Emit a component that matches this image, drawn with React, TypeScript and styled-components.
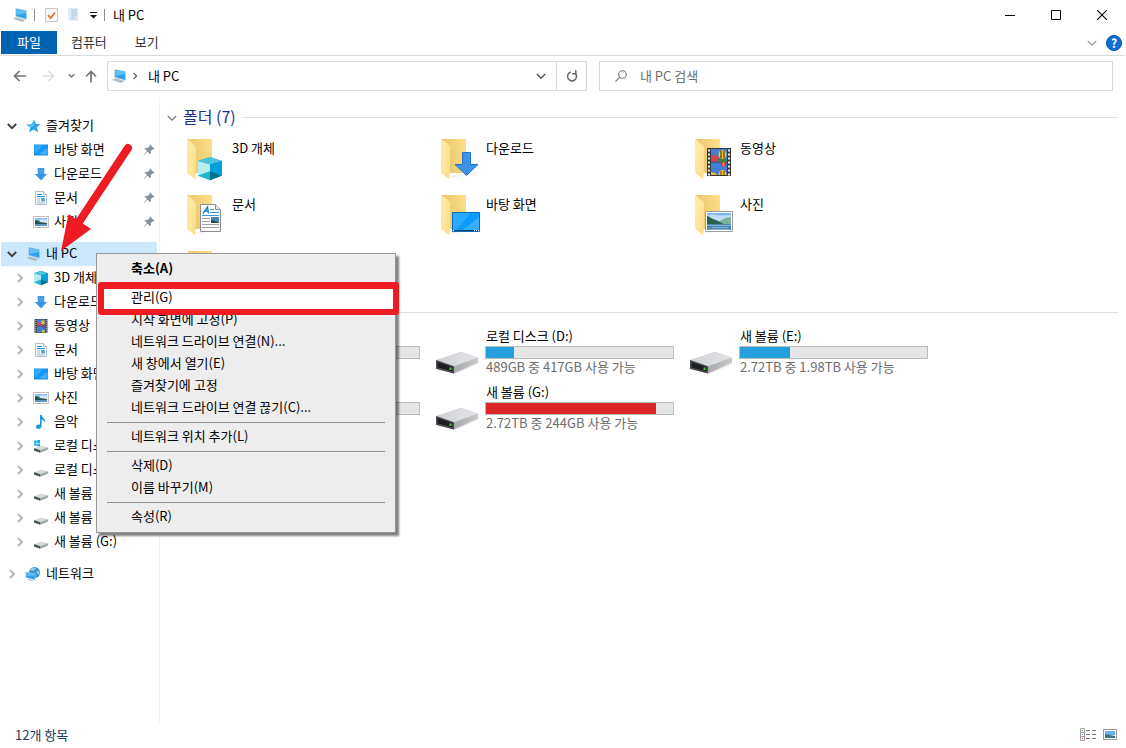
import React from "react";
import styled, { createGlobalStyle, css } from "styled-components";

const GlobalStyle = createGlobalStyle`
  *, *::before, *::after { box-sizing: border-box; }
  body {
    margin: 0;
    background: #fff;
    color: #000;
    font-family: "Noto Sans CJK KR", "Malgun Gothic", sans-serif;
    font-size: 13px;
    line-height: 18px;
  }
  button, input { font: inherit; color: inherit; }
  button { border: 0; padding: 0; background: none; }
  ul { list-style: none; margin: 0; padding: 0; }
  svg { display: block; flex: none; }
`;

/* ---------- icons ---------- */

const PcIcon = () => (
  <svg width="16" height="16" viewBox="0 0 16 16">
    <path d="M.500 11.700 4.500 9.400l9.500 3-3.600 2.600z" fill="#a9bdc9" />
    <path d="M.500 11.700 4.500 9.400l9.500 3-.8.500L4.600 10.600l-3 1.600z" fill="#dfe9ef" />
    <path d="M3.600 1.200 14.600 3.400v8.800L3.600 9.200z" fill="#7fb4d8" />
    <path d="M4.300 2 14 4v7.400L4.300 8.700z" fill="#2f9ff0" />
    <path d="M4.300 2 14 4v2L4.300 8z" fill="#63bffa" />
  </svg>
);

const StarIcon = () => (
  <svg width="16" height="16" viewBox="0 0 16 16">
    <path d="M9.200 1.400 10.800 6l4.700.2-3.700 3 1.400 5.200-4.500-2.800L4 14.600l1.400-5L1.300 6.800l5.200-.5z" fill="#2fa2ee" />
    <path d="M9.200 1.400 8.600 8 5.400 9.600 1.300 6.800l5.200-.5z" fill="#5fbdf6" />
  </svg>
);

const DesktopIcon = () => (
  <svg width="16" height="16" viewBox="0 0 16 16">
    <path d="M1 2.500h14v11H1z" fill="#0a84d8" />
    <path d="M1.500 3h13v9.500h-13z" fill="#1499f6" />
    <path d="M1.500 12.500 10 3H1.500z" fill="#2cacff" />
    <path d="M6 12.500l8.500-7v7z" fill="#3db0fc" />
  </svg>
);

const DownIcon = () => (
  <svg width="16" height="16" viewBox="0 0 16 16">
    <path d="M4.700 2h6.600v6H14l-6 6.500L2 8h2.700z" fill="#3892e6" />
    <path d="M5.500 2.500h5v6h-5z" fill="#4a9feb" />
  </svg>
);

const DocIcon = () => (
  <svg width="16" height="16" viewBox="0 0 16 16">
    <path d="M2.500 1.500h8l3 3v10h-11z" fill="#f8fbfd" stroke="#b4bfc6" />
    <path d="M10.500 1.500v3h3" fill="#e6edf2" stroke="#b4bfc6" />
    <path d="M4 4.500h5M4 6.500h8" stroke="#2c95d6" strokeWidth="1.200" />
    <path d="M4 9h3M4 11h3M4 13h8" stroke="#a9b6c0" />
    <path d="M8 8h4v3.500H8z" fill="#5ea8d2" />
  </svg>
);

const PhotoIcon = () => (
  <svg width="16" height="16" viewBox="0 0 16 16">
    <path d="M.500 2.500h15v11H.500z" fill="#fff" stroke="#bdbfc1" />
    <path d="M2 4h12v4H2z" fill="#8cc5f2" />
    <path d="M7 6c2-1 4-.500 7 .500V9H7z" fill="#d6e9f7" />
    <path d="M2 6.500c2-.600 3 0 5 1.500L14 9v1.500H2z" fill="#27545c" />
    <path d="M2 10h12v2H2z" fill="#5f96bd" />
  </svg>
);

const CubeShape = () => (
  <>
    <path d="M8 .800 15 3.200v9L8 15.200 1 12.200v-9z" fill="#0fa5ce" />
    <path d="M1 3.200 8 5.200v10l-7-3z" fill="#b8ecf1" />
    <path d="M8 .800l7 2.400-7 2.200-7-2.200z" fill="#49c5dc" />
    <path d="M8 5.400l7-2.200v9l-7-2z" fill="#03a0d6" />
    <path d="M1 12.200l7-2.600 7 2.600-7 3z" fill="#1db6cf" />
    <path d="M8 9.600l7 2.600-7 3z" fill="#04708f" />
  </>
);

const CubeIcon = () => (
  <svg width="16" height="16" viewBox="0 0 16 16"><CubeShape /></svg>
);

const FilmShape = () => (
  <>
    <path d="M0 0h24v28H0z" fill="#3a3a3e" />
    <path d="M4 1h16v12.500H4zM4 14.500h16V27H4z" fill="#3f7fd6" />
    <path d="M4 9l3-3 4 3 4 2h5v2.500H4z" fill="#d8434f" />
    <path d="M10 11h10v2.500H10z" fill="#2e8b45" />
    <ellipse cx="15.500" cy="6.500" rx="4" ry="4.500" fill="#f0c62c" />
    <path d="M13.500 2.500h1v8h-1zM16.500 2.500h1v8h-1z" fill="#222" />
    <path d="M13 14.500h7l-2.500 4.500h-2z" fill="#d6303f" />
    <path d="M15.500 14.500h2l-.5 4h-1z" fill="#f0c62c" />
    <path d="M4 24l4 1 2 2H4z" fill="#eebc2a" />
    <path d="M11.500 27a4 5 0 0 1 8 0z" fill="#f0c62c" />
    <path d="M13.500 23h1v4h-1zM16.500 23h1v4h-1z" fill="#a22" />
    <path d="M2 1.500v26M22 1.500v26" stroke="#eee" strokeWidth="2" strokeDasharray="2 2" />
  </>
);

const FilmIcon = () => (
  <svg width="16" height="16" viewBox="0 0 16 16">
    <path d="M1.500 1h13v14h-13z" fill="#4a4a4e" />
    <path d="M4 1.500h8v6H4zM4 8.500h8v6H4z" fill="#3f7fd6" />
    <path d="M4 5l2-1.500L9 6l3 .5v1H4z" fill="#c8505a" />
    <path d="M8.500 2.500h3v3.500h-3zM9 12h2.500v2.500H9z" fill="#e8c040" />
    <path d="M9.500 8.500H12L11 10.500z" fill="#b03040" />
    <path d="M2.700 2v13M13.300 2v13" stroke="#b9b9b9" strokeDasharray="1 1" />
  </svg>
);

const MusicIcon = () => (
  <svg width="16" height="16" viewBox="0 0 16 16">
    <path d="M7 1h1.600c.300 2.600 4.400 3.400 3.400 7.600-.600-2-1.800-2.800-3.400-3.200v6.800c0 3-5.600 3.600-5.600.800 0-2 2.400-2.800 4-2.200z" fill="#1b93e0" />
  </svg>
);

const DriveSmall = ({ system }: { system?: boolean }) => (
  <svg width="16" height="16" viewBox="0 0 16 16">
    <path d="M1 10.200 8.500 7.600l6.500 1.600-7.500 3z" fill="#d6d8da" />
    <path d="M1 10.200l6.500 2v2.600L1 12.400z" fill="#3d4144" />
    <path d="M7.500 12.200l7.500-3v2.400l-7.500 3.200z" fill="#a1a4a7" />
    <path d="M5 12.200h1v1H5z" fill="#3ecb3e" />
    {system && (
      <path d="M1 2.800l2.700-.5v2.600H1zM4.200 2.200 7 1.700v3.200H4.200zM1 5.400h2.700V8L1 7.600zM4.200 5.400H7v3.200l-2.800-.5z" fill="#14b1e8" />
    )}
  </svg>
);

const NetworkIcon = () => (
  <svg width="16" height="16" viewBox="0 0 16 16">
    <circle cx="9.500" cy="6.500" r="5.500" fill="#3a8fc6" />
    <path d="M6 2.500c2-1.500 4-1.500 5 0L8.500 5 5 4.500zM12 4l2.500 2-1 3-2-2z" fill="#8fcbe9" />
    <path d="M.500 5.500l10 2.300v6.600L.500 11.600z" fill="#a8d4f0" />
    <path d="M1.200 6.400l8.600 2v5.200l-8.600-2.400z" fill="#2f9ef0" />
    <path d="M1.200 6.400l8.600 2v1.200L1.200 10z" fill="#5bb8f8" />
    <path d="M3 13.400l5 1.400" stroke="#9fb2bf" />
  </svg>
);

const PinIcon = () => (
  <svg width="12" height="12" viewBox="0 0 12 12">
    <path d="M7.200.600l4.200 4.200-1 .6-.6-.2-2 2 .2 2.200-.9.900-2.600-2.600L.800 11.300l-.2-.2L3.900 7 1.600 4.700l.9-.9 2.200.2 2-2-.2-.6z" fill="#8595a0" />
  </svg>
);

const Chevron = ({ dir, color = "#a6a6a6", width = 1.7 }: { dir: "right" | "down"; color?: string; width?: number }) => (
  <svg width="12" height="12" viewBox="0 0 12 12" fill="none" stroke={color} strokeWidth={width}>
    <path d={dir === "right" ? "M4 2 8 6l-4 4" : "M1.800 4 6 8.200 10.200 4"} />
  </svg>
);

const FolderIcon = ({ children }: { children?: React.ReactNode }) => (
  <svg width="48" height="48" viewBox="0 0 48 48">
    <defs>
      <linearGradient id="folderBack" x1="0" x2="1" y1=".3" y2="0">
        <stop offset="0" stopColor="#e9c46a" />
        <stop offset="1" stopColor="#fde08a" />
      </linearGradient>
      <linearGradient id="folderFront" x1="0" x2="1" y1="0" y2="1">
        <stop offset="0" stopColor="#ffeeb0" />
        <stop offset="1" stopColor="#fbdc85" />
      </linearGradient>
    </defs>
    <path d="M12 42l28-5 2 1-28 5z" fill="#f0f0f0" />
    <path d="M5 4h25v34H12z" fill="url(#folderBack)" />
    <path d="M5 4l9 7v23l-1 10-8-6z" fill="url(#folderFront)" />
    {children}
  </svg>
);

const folderBadges: Record<string, React.ReactNode> = {
  cube: <g transform="translate(14.300 20.700) scale(1.710 1.620)"><CubeShape /></g>,
  download: <path d="M26.500 17.500h8v12h7.500L30.500 40.500 19 29.500h7.500z" fill="#3b94e8" stroke="#2373c4" />,
  film: <g transform="translate(17 13)"><FilmShape /></g>,
  doc: (
    <>
      <path d="M18.500 13.500h15l5 5v22h-20z" fill="#fbfbfb" stroke="#8b8f92" />
      <path d="M33.500 13.500v5h5" fill="#e4e6e8" stroke="#8b8f92" />
      <path d="M21 22.500 25.500 16l1 6.500M23 20h3" stroke="#1a84d0" strokeWidth="1.400" fill="none" />
      <path d="M28 18.500h4M28 21.500h9M20 24.500h17" stroke="#3a97da" />
      <path d="M20 27.500h8M20 30.500h8M20 33.500h17M20 36.500h17" stroke="#a0a3a6" />
      <path d="M29 26h8v6h-8z" fill="#4c83b5" />
      <path d="M29 29l4 1 4 2h-8z" fill="#244b4b" />
    </>
  ),
  desktop: (
    <>
      <path d="M16.500 21.500h27v19h-27z" fill="#0a9bff" stroke="#0a6db8" />
      <path d="M17 22h18L20 39h-3z" fill="#2aaaff" />
      <path d="M43 26v13H27z" fill="#37b0ff" />
      <path d="M17 39.500h26" stroke="#063f70" />
      <path d="M17 39.500h1M38 39.500h1M40 39.500h1M42 39.500h1" stroke="#fff" />
    </>
  ),
  photo: (
    <>
      <path d="M15.500 20.500h27v20h-27z" fill="#fff" stroke="#9a9da0" />
      <path d="M17 22h24v9H17z" fill="#7db4f5" />
      <path d="M17 24c4 0 6-1 10 0s9 0 14 0v8H17z" fill="#c3def8" />
      <path d="M28 31c3-2 5-2 7-4l6-1v7H26z" fill="#78b39a" />
      <path d="M17 25c2 0 3 2 6 3s5 2 7 3l4 2H17z" fill="#2c6150" />
      <path d="M17 33h24v6H17z" fill="#4f86b0" />
      <path d="M17 34.500h24M22 36.500h16M19 38.500h20" stroke="#86b0cf" />
    </>
  ),
  music: <path d="M28 18h3c0 5 7 6 6 13-1-3-3-4-6-5v10c0 6-10 6-10 1 0-3 4-5 7-4z" fill="#1b93e0" />,
};

const DriveIcon = () => (
  <svg width="48" height="48" viewBox="3 0 48 48">
    <defs>
      <linearGradient id="driveTop" x1="0" x2="1">
        <stop offset="0" stopColor="#cfd1d4" />
        <stop offset="1" stopColor="#e4e5e8" />
      </linearGradient>
      <linearGradient id="driveSide" x1="0" x2="1">
        <stop offset="0" stopColor="#8f9194" />
        <stop offset="1" stopColor="#c6c8ca" />
      </linearGradient>
    </defs>
    <path d="M24 45l21-9v2l-20 9z" fill="#ebebeb" />
    <path d="M3 34.500 28 26l17 5.500v5L21 47.500 3 43z" fill="url(#driveSide)" />
    <path d="M3 34 28 26l17 5.500-24 8.700z" fill="url(#driveTop)" />
    <path d="M3 34l18 6.200v7.300L3 42.800z" fill="#4a4d50" />
    <path d="M4.500 36l15 5v4.600l-15-4z" fill="#1c1e20" />
    <path d="M16.500 41.500h2v2.500h-2z" fill="#35d435" />
  </svg>
);

/* ---------- window frame ---------- */

const Window = styled.div`
  position: relative;
  display: flex;
  flex-direction: column;
  min-height: 100vh;
  padding: 0 1px;
  background: #fff;
`;

const TitleBar = styled.header`
  display: flex;
  align-items: flex-start;
  justify-content: space-between;
  height: 31px;
`;

const QuickAccess = styled.div`
  display: flex;
  align-items: center;
  height: 30px;
  padding-left: 11px;
`;

const QuickButtons = styled.div`
  display: flex;
  margin-left: 6px;
`;

const Divider = styled.span`
  width: 1px;
  height: 12px;
  background: #8a8a8a;
`;

const AppIcon = styled.span`
  margin-right: 6px;
`;

const QuickButton = styled.button`
  display: grid;
  place-items: center;
  width: 21px;
  height: 22px;
`;

const Title = styled.h1`
  margin: 0 0 0 8px;
  font-size: 13px;
  font-weight: 400;
`;

const CaptionButtons = styled.div`
  display: flex;
`;

const CaptionButton = styled.button`
  display: grid;
  place-items: center;
  width: 46px;
  height: 30px;
`;

const Ribbon = styled.nav`
  display: flex;
  align-items: flex-start;
  height: 25px;
  border-bottom: 1px solid #dadbdc;
`;

const RibbonTab = styled.button<{ $primary?: boolean }>`
  height: 23px;
  padding: 0 14px 2px;
  color: #333;
  ${(p) =>
    p.$primary &&
    css`
      padding: 0 16px 2px;
      background: #0063b1;
      color: #fff;
    `}
`;

const RibbonTools = styled.div`
  display: flex;
  align-items: center;
  gap: 8px;
  height: 24px;
  margin-left: auto;
  padding-right: 3px;
`;

const HelpButton = styled.button`
  width: 16px;
  height: 16px;
  border: 1px solid #0a4f94;
  border-radius: 50%;
  background: #0a6fd6;
  color: #fff;
  font-size: 12px;
  font-weight: 700;
  line-height: 14px;
  text-align: center;
`;

const NavBar = styled.div`
  display: flex;
  align-items: center;
  height: 42px;
  padding: 0 12px 2px 9px;
`;

const NavButtons = styled.div`
  display: flex;
  align-items: center;
  width: 97px;
`;

const NavButton = styled.button<{ $width: number }>`
  display: grid;
  place-items: center;
  width: ${(p) => p.$width}px;
  height: 28px;
`;

const AddressBox = styled.div`
  display: flex;
  align-items: stretch;
  flex: 480 1 480px;
  height: 30px;
  margin-right: 12px;
  border: 1px solid #d9d9d9;
`;

const Crumbs = styled.div`
  display: flex;
  align-items: center;
  flex: 1;
  gap: 4px;
  padding-left: 3px;
`;

const Crumb = styled.button`
  height: 26px;
  margin-left: 5px;
`;

const AddressButton = styled.button<{ $divided?: boolean }>`
  display: grid;
  place-items: center;
  width: 30px;
  border-left: ${(p) => (p.$divided ? "1px solid #d9d9d9" : "0")};
`;

const SearchBox = styled.label`
  display: flex;
  align-items: center;
  flex: 514 1 514px;
  gap: 12px;
  height: 30px;
  padding-left: 14px;
  border: 1px solid #d9d9d9;
`;

const SearchInput = styled.input`
  flex: 1;
  min-width: 0;
  border: 0;
  padding: 0;
  outline: 0;
  background: none;
  &::placeholder { color: #6d6d6d; opacity: 1; }
`;

const Body = styled.div`
  display: flex;
  flex: 1;
`;

/* ---------- navigation tree ---------- */

const Sidebar = styled.nav`
  display: flex;
  flex-direction: column;
  flex: none;
  gap: 8px;
  width: 159px;
  padding: 16px 2px 0 0;
  border-right: 1px solid #f3f3f3;
`;

const TreeRow = styled.a<{ $child?: boolean; $selected?: boolean }>`
  display: flex;
  align-items: center;
  height: 24px;
  padding: 0 2px 0 ${(p) => (p.$child ? 13 : 5)}px;
  background: ${(p) => (p.$selected ? "#cce8ff" : "transparent")};
  color: #000;
  text-decoration: none;
  white-space: nowrap;
`;

const TreeToggle = styled.span`
  width: 12px;
  margin-right: 7px;
`;

const TreeLabel = styled.span`
  flex: 1;
  margin-left: 5px;
  padding-bottom: 2px;
`;

/* ---------- content ---------- */

const Content = styled.main`
  flex: 1;
  min-width: 0;
  padding: 6px 7px 0 6px;
`;

const GroupHeader = styled.h2`
  display: flex;
  align-items: center;
  gap: 5px;
  height: 27px;
  margin: 0;
  color: #1e3287;
  font-size: 16px;
  font-weight: 400;
  line-height: 22px;
  &::after {
    content: "";
    flex: 1;
    height: 1px;
    margin-left: 1px;
    background: #e2e2e2;
  }
`;

const GroupTitle = styled.span`
  padding-bottom: 4px;
`;

const Tiles = styled.ul`
  display: grid;
  grid-template-columns: repeat(auto-fill, 254px);
  grid-auto-rows: 56px;
  padding-left: 16px;
`;

const Tile = styled.li<{ $drive?: boolean }>`
  display: flex;
  align-items: flex-start;
  gap: 1px;
  padding-top: ${(p) => (p.$drive ? 0 : 4)}px;
`;

const TileName = styled.div<{ $folder?: boolean }>`
  padding-left: 1px;
  padding-top: ${(p) => (p.$folder ? 4 : 1)}px;
`;

const TileDetail = styled.div`
  padding-left: 1px;
  color: #6d6d6d;
  line-height: 16px;
`;

const Meter = styled.div`
  width: 189px;
  height: 13px;
  margin-top: 1px;
  border: 1px solid #bcbcbc;
  background: #e6e6e6;
`;

const MeterFill = styled.div<{ $full?: boolean }>`
  height: 100%;
  background: ${(p) => (p.$full ? "#da2626" : "#26a0da")};
`;

const StatusBar = styled.footer`
  display: flex;
  align-items: center;
  justify-content: space-between;
  height: 25px;
  padding: 0 8px 2px 14px;
  color: #1e395b;
`;

const ViewModes = styled.div`
  display: flex;
  align-items: center;
  gap: 6px;
`;

/* ---------- overlays ---------- */

const Menu = styled.ul`
  position: absolute;
  left: 96px;
  top: 253px;
  z-index: 2;
  width: 300px;
  padding: 3px 2px 5px;
  border: 1px solid #999;
  background: #ededed;
  box-shadow: 3px 3px 2px rgba(0, 0, 0, 0.5);
`;

const MenuItem = styled.li<{ $marked?: boolean }>`
  position: relative;
  ${(p) =>
    p.$marked &&
    css`
      z-index: 1;
      background: #fff;
      box-shadow: 0 1px #fff;
      &::after {
        content: "";
        position: absolute;
        inset: -4px -6px -7px -1px;
        border: 6px solid #ed1c24;
        border-top-width: 7px;
        border-radius: 3px;
        pointer-events: none;
      }
    `}
`;

const MenuButton = styled.button<{ $default?: boolean }>`
  display: block;
  width: 100%;
  height: 22px;
  padding-left: 32px;
  text-align: left;
  font-weight: ${(p) => (p.$default ? 700 : 400)};
`;

const MenuSeparator = styled.li`
  height: 1px;
  margin: 4px 8px 2px;
  background: #919191;
`;

const PointerArrow = styled.svg`
  position: absolute;
  left: 56px;
  top: 140px;
  z-index: 1;
  pointer-events: none;
`;

/* ---------- data ---------- */

type Node = { label: string; icon: React.ReactNode };

const favorites: Node[] = [
  { label: "바탕 화면", icon: <DesktopIcon /> },
  { label: "다운로드", icon: <DownIcon /> },
  { label: "문서", icon: <DocIcon /> },
  { label: "사진", icon: <PhotoIcon /> },
];

const pcChildren: Node[] = [
  { label: "3D 개체", icon: <CubeIcon /> },
  { label: "다운로드", icon: <DownIcon /> },
  { label: "동영상", icon: <FilmIcon /> },
  { label: "문서", icon: <DocIcon /> },
  { label: "바탕 화면", icon: <DesktopIcon /> },
  { label: "사진", icon: <PhotoIcon /> },
  { label: "음악", icon: <MusicIcon /> },
  { label: "로컬 디스크 (C:)", icon: <DriveSmall system /> },
  { label: "로컬 디스크 (D:)", icon: <DriveSmall /> },
  { label: "새 볼륨 (E:)", icon: <DriveSmall /> },
  { label: "새 볼륨 (F:)", icon: <DriveSmall /> },
  { label: "새 볼륨 (G:)", icon: <DriveSmall /> },
];

const folders = [
  { name: "3D 개체", badge: "cube" },
  { name: "다운로드", badge: "download" },
  { name: "동영상", badge: "film" },
  { name: "문서", badge: "doc" },
  { name: "바탕 화면", badge: "desktop" },
  { name: "사진", badge: "photo" },
  { name: "음악", badge: "music" },
];

const drives: { name: string; used: number; detail?: string; full?: boolean }[] = [
  { name: "로컬 디스크 (C:)", used: 50 },
  { name: "로컬 디스크 (D:)", used: 15, detail: "489GB 중 417GB 사용 가능" },
  { name: "새 볼륨 (E:)", used: 27, detail: "2.72TB 중 1.98TB 사용 가능" },
  { name: "새 볼륨 (F:)", used: 50 },
  { name: "새 볼륨 (G:)", used: 91, detail: "2.72TB 중 244GB 사용 가능", full: true },
];

const menuGroups: string[][] = [
  ["축소(A)"],
  ["관리(G)", "시작 화면에 고정(P)", "네트워크 드라이브 연결(N)...", "새 창에서 열기(E)", "즐겨찾기에 고정", "네트워크 드라이브 연결 끊기(C)..."],
  ["네트워크 위치 추가(L)"],
  ["삭제(D)", "이름 바꾸기(M)"],
  ["속성(R)"],
];

/* ---------- sections ---------- */

const TopBars = () => (
  <>
    <TitleBar>
      <QuickAccess>
        <AppIcon><PcIcon /></AppIcon>
        <Divider />
        <QuickButtons>
          <QuickButton aria-label="속성">
            <svg width="13" height="14" viewBox="0 0 13 14">
              <path d="M.500.500h12v13H.500z" fill="#fafafa" stroke="#c9c9c9" />
              <path d="M3 7l2.700 3L10 4.500" fill="none" stroke="#ee6a35" strokeWidth="1.800" />
            </svg>
          </QuickButton>
          <QuickButton aria-label="새 폴더">
            <svg width="12" height="14" viewBox="0 0 12 14">
              <path d="M1 .500h9.500V12H3z" fill="#c6d9ea" />
              <path d="M1 .500 4 2.500V13.500L1 12z" fill="#e0ecf6" />
              <path d="M8 8h3v5H8z" fill="#dfe9f2" />
            </svg>
          </QuickButton>
          <QuickButton aria-label="빠른 실행 도구 모음 사용자 지정">
            <svg width="7" height="7" viewBox="0 0 7 7">
              <path d="M0 0h7v1H0zM0 3h7L3.500 6.500z" fill="#111" />
            </svg>
          </QuickButton>
        </QuickButtons>
        <Divider />
        <Title>내 PC</Title>
      </QuickAccess>
      <CaptionButtons>
        <CaptionButton aria-label="최소화">
          <svg width="10" height="10" viewBox="0 0 10 10"><path d="M0 5.500h10" stroke="#000" /></svg>
        </CaptionButton>
        <CaptionButton aria-label="최대화">
          <svg width="10" height="10" viewBox="0 0 10 10"><path d="M.500.500h9v9h-9z" fill="none" stroke="#000" /></svg>
        </CaptionButton>
        <CaptionButton aria-label="닫기">
          <svg width="10" height="10" viewBox="0 0 10 10"><path d="M0 0l10 10M10 0 0 10" stroke="#000" strokeWidth="1.100" /></svg>
        </CaptionButton>
      </CaptionButtons>
    </TitleBar>

    <Ribbon>
      <RibbonTab $primary>파일</RibbonTab>
      <RibbonTab>컴퓨터</RibbonTab>
      <RibbonTab>보기</RibbonTab>
      <RibbonTools>
        <Chevron dir="down" color="#9a9a9a" width={1.2} />
        <HelpButton aria-label="도움말">?</HelpButton>
      </RibbonTools>
    </Ribbon>

    <NavBar>
      <NavButtons>
        <NavButton $width={20} aria-label="뒤로">
          <svg width="14" height="12" viewBox="0 0 14 12" fill="none" stroke="#757575" strokeWidth="1.700"><path d="M1.500 6H13M6.500 1l-5 5 5 5" /></svg>
        </NavButton>
        <NavButton $width={38} aria-label="앞으로">
          <svg width="14" height="12" viewBox="0 0 14 12" fill="none" stroke="#dcdcdc" strokeWidth="1.700"><path d="M1 6h11.500M7.500 1l5 5-5 5" /></svg>
        </NavButton>
        <NavButton $width={10} aria-label="최근 위치">
          <svg width="7" height="6" viewBox="0 0 7 6" fill="none" stroke="#777" strokeWidth="1.500"><path d="M.700 1.200l2.800 2.800 2.800-2.800" /></svg>
        </NavButton>
        <NavButton $width={32} aria-label="위로">
          <svg width="12" height="14" viewBox="0 0 12 14" fill="none" stroke="#757575" strokeWidth="1.700"><path d="M6 2.500V13.500M1 7.500l5-5 5 5" /></svg>
        </NavButton>
      </NavButtons>
      <AddressBox>
        <Crumbs>
          <PcIcon />
          <svg width="8" height="8" viewBox="0 0 8 8" fill="none" stroke="#666" strokeWidth="1.400"><path d="M2.500 1 5.500 4l-3 3" /></svg>
          <Crumb>내 PC</Crumb>
        </Crumbs>
        <AddressButton aria-label="이전 위치">
          <Chevron dir="down" color="#555" width={1.5} />
        </AddressButton>
        <AddressButton $divided aria-label="새로 고침">
          <svg width="14" height="14" viewBox="0 0 24 24" fill="none" stroke="#666" strokeWidth="2.600">
            <path d="M17.500 7.200A7.700 7.700 0 1 1 10 5.200" />
            <path d="M18.500 2v6.200h-6.200" />
          </svg>
        </AddressButton>
      </AddressBox>
      <SearchBox>
        <svg width="14" height="14" viewBox="0 0 14 14" fill="none" stroke="#777" strokeWidth="1.100">
          <circle cx="8.500" cy="5.500" r="3.800" />
          <path d="M5.800 8.200 1.500 12.500" />
        </svg>
        <SearchInput type="search" aria-label="내 PC 검색" placeholder="내 PC 검색" />
      </SearchBox>
    </NavBar>
  </>
);

const NavigationTree = () => (
  <Sidebar aria-label="탐색 창">
    <div>
      <TreeRow href="#favorites">
        <TreeToggle><Chevron dir="down" color="#404040" width={1.9} /></TreeToggle>
        <StarIcon />
        <TreeLabel>즐겨찾기</TreeLabel>
      </TreeRow>
      {favorites.map((n) => (
        <TreeRow $child key={n.label} href="#item">
          <TreeToggle />
          {n.icon}
          <TreeLabel>{n.label}</TreeLabel>
          <PinIcon />
        </TreeRow>
      ))}
    </div>
    <div>
      <TreeRow $selected href="#pc">
        <TreeToggle><Chevron dir="down" color="#404040" width={1.9} /></TreeToggle>
        <PcIcon />
        <TreeLabel>내 PC</TreeLabel>
      </TreeRow>
      {pcChildren.map((n) => (
        <TreeRow $child key={n.label} href="#item">
          <TreeToggle><Chevron dir="right" /></TreeToggle>
          {n.icon}
          <TreeLabel>{n.label}</TreeLabel>
        </TreeRow>
      ))}
    </div>
    <TreeRow href="#network">
      <TreeToggle><Chevron dir="right" /></TreeToggle>
      <NetworkIcon />
      <TreeLabel>네트워크</TreeLabel>
    </TreeRow>
  </Sidebar>
);

const ContextMenu = () => (
  <Menu role="menu">
    {menuGroups.map((group, g) => (
      <React.Fragment key={group[0]}>
        {g > 0 && <MenuSeparator role="separator" />}
        {group.map((label) => (
          <MenuItem key={label} role="none" $marked={label === "관리(G)"}>
            <MenuButton role="menuitem" $default={g === 0}>{label}</MenuButton>
          </MenuItem>
        ))}
      </React.Fragment>
    ))}
  </Menu>
);

export default function App() {
  return (
    <Window>
      <GlobalStyle />
      <TopBars />
      <Body>
        <NavigationTree />
        <Content>
          <GroupHeader>
            <Chevron dir="down" color="#777" width={1.2} />
            <GroupTitle>폴더 (7)</GroupTitle>
          </GroupHeader>
          <Tiles>
            {folders.map((f) => (
              <Tile key={f.name}>
                <FolderIcon>{folderBadges[f.badge]}</FolderIcon>
                <TileName $folder>{f.name}</TileName>
              </Tile>
            ))}
          </Tiles>
          <GroupHeader>
            <Chevron dir="down" color="#777" width={1.2} />
            <GroupTitle>장치 및 드라이브 (5)</GroupTitle>
          </GroupHeader>
          <Tiles>
            {drives.map((d) => (
              <Tile $drive key={d.name}>
                <DriveIcon />
                <div>
                  <TileName>{d.name}</TileName>
                  <Meter role="meter" aria-label={d.name} aria-valuenow={d.used} aria-valuemin={0} aria-valuemax={100}>
                    <MeterFill $full={d.full} style={{ width: `${d.used}%` }} />
                  </Meter>
                  {d.detail && <TileDetail>{d.detail}</TileDetail>}
                </div>
              </Tile>
            ))}
          </Tiles>
        </Content>
      </Body>
      <StatusBar>
        <span>12개 항목</span>
        <ViewModes>
          <button aria-label="자세히">
            <svg width="17" height="13" viewBox="0 0 17 13" fill="none" stroke="#a0a0a0">
              <path d="M.500.500h4v12h-4zM.500 4.500h4M.500 8.500h4" />
              <path d="M6 2.500h4M12 2.500h4M6 6.500h4M12 6.500h4M6 10.500h4M12 10.500h4" stroke="#777" />
              <path d="M2 2.500h1" stroke="#3b8f5b" />
              <path d="M2 6.500h1" stroke="#3b7fe0" />
              <path d="M2 10.500h1" stroke="#d22" />
            </svg>
          </button>
          <button aria-label="큰 아이콘">
            <svg width="14" height="11" viewBox="0 0 14 11">
              <path d="M.500.500h13v10H.500z" fill="#fff" stroke="#999" />
              <path d="M2 2h10v4H2z" fill="#6fb0f0" />
              <path d="M2 5l5 1 5 1v2H2z" fill="#3f7480" />
            </svg>
          </button>
        </ViewModes>
      </StatusBar>
      <PointerArrow width="80" height="114" viewBox="56 140 80 114" fill="#ed1c24">
        <path d="M128 148 79 222" stroke="#ed1c24" strokeWidth="8" strokeLinecap="round" />
        <path d="M61 251l7.500-37 22.500 15z" />
      </PointerArrow>
      <ContextMenu />
    </Window>
  );
}
